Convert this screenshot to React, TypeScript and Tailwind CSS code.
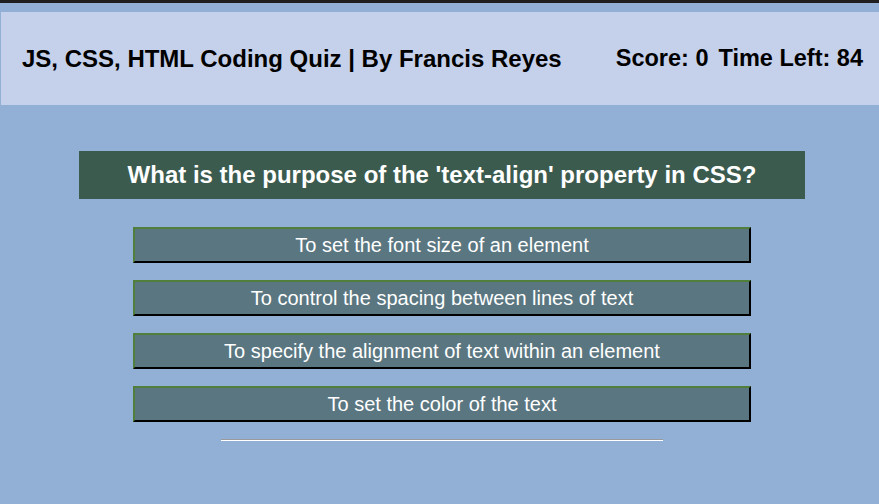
const answers = [
  "To set the font size of an element",
  "To control the spacing between lines of text",
  "To specify the alignment of text within an element",
  "To set the color of the text",
];

const App = () => {
  return (
    <div className="w-[879px] h-[504px] overflow-hidden bg-[#92afd6] font-[family-name:'Liberation_Sans',Arial,sans-serif]">
      <div className="h-[3px] bg-[#1e1e1e]" />
      <header className="mt-[9px] ml-px h-[93px] bg-[#c5d0ea] flex items-center justify-between pl-[21px] pr-[16px] text-black font-bold text-[24px]">
        <h1>JS, CSS, HTML Coding Quiz | By Francis Reyes</h1>
        <div className="flex gap-[10px] text-[23.5px]">
          <span>Score: 0</span>
          <span>Time Left: 84</span>
        </div>
      </header>

      <main className="pl-[5px] pt-[46px] flex flex-col items-center">
        <div className="w-[726px] h-[48px] bg-[#3b5b4f] text-white font-bold text-[24px] flex items-center justify-center">
          What is the purpose of the 'text-align' property in CSS?
        </div>
        <div className="mt-[28px] flex flex-col gap-[17px]">
          {answers.map((a) => (
            <button
              key={a}
              className="w-[618px] h-[36px] bg-[#5a7680] text-white text-[20px] border-2 border-t-[#4f7f3a] border-l-[#4f7f3a] border-b-black border-r-black"
            >
              {a}
            </button>
          ))}
        </div>
        <hr className="mt-[17px] w-[442px] border-t border-t-[#9a9a9a] border-b border-b-white" />
      </main>
    </div>
  );
};

export default App;
